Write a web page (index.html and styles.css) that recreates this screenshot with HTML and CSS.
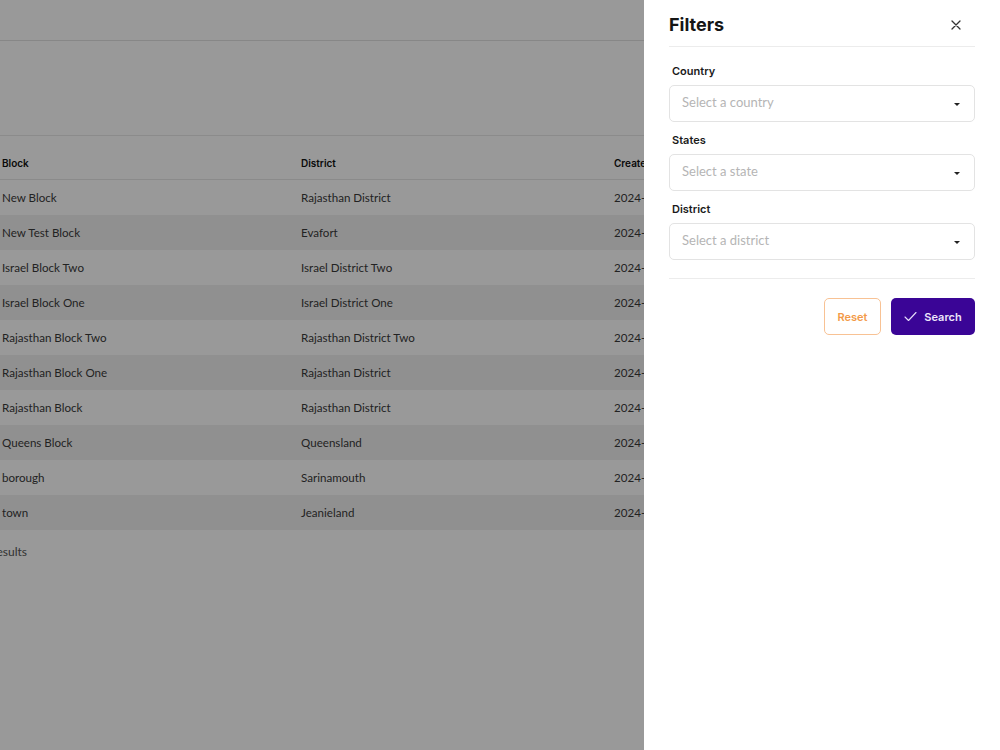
FILE: index.html
```html
<!DOCTYPE html>
<html>
<head>
<meta charset="utf-8">
<link rel="stylesheet" href="styles.css">
</head>
<body>
<div class="page">
  <header class="topbar"></header>
  <section class="toolbar"></section>
  <table class="grid">
    <thead>
      <tr><th class="c1">Block</th><th class="c2">District</th><th class="c3">Created At</th><th>Actions</th></tr>
    </thead>
    <tbody>
      <tr><td>New Block</td><td>Rajasthan District</td><td>2024-10-01</td><td></td></tr>
      <tr><td>New Test Block</td><td>Evafort</td><td>2024-10-01</td><td></td></tr>
      <tr><td>Israel Block Two</td><td>Israel District Two</td><td>2024-10-01</td><td></td></tr>
      <tr><td>Israel Block One</td><td>Israel District One</td><td>2024-10-01</td><td></td></tr>
      <tr><td>Rajasthan Block Two</td><td>Rajasthan District Two</td><td>2024-10-01</td><td></td></tr>
      <tr><td>Rajasthan Block One</td><td>Rajasthan District</td><td>2024-10-01</td><td></td></tr>
      <tr><td>Rajasthan Block</td><td>Rajasthan District</td><td>2024-10-01</td><td></td></tr>
      <tr><td>Queens Block</td><td>Queensland</td><td>2024-10-01</td><td></td></tr>
      <tr><td>borough</td><td>Sarinamouth</td><td>2024-10-01</td><td></td></tr>
      <tr><td>town</td><td>Jeanieland</td><td>2024-10-01</td><td></td></tr>
    </tbody>
  </table>
  <div class="footer"><span class="count">Showing 1 to 10 of 10 results</span></div>
</div>

<div class="backdrop"></div>

<aside class="drawer">
  <div class="drawer-head">
    <h2 class="drawer-title">Filters</h2>
    <button class="close" aria-label="Close">
      <svg width="12" height="12" viewBox="0 0 12 12"><path d="M2 2 L10 10 M10 2 L2 10" stroke="#333" stroke-width="1.3" stroke-linecap="round"/></svg>
    </button>
  </div>
  <div class="fields">
    <label class="label">Country</label>
    <div class="select"><span class="ph">Select a country</span><span class="caret"></span></div>
    <label class="label">States</label>
    <div class="select"><span class="ph">Select a state</span><span class="caret"></span></div>
    <label class="label">District</label>
    <div class="select"><span class="ph">Select a district</span><span class="caret"></span></div>
  </div>
  <div class="actions">
    <button class="btn reset">Reset</button>
    <button class="btn search">
      <svg width="13" height="11" viewBox="0 0 13 11"><path d="M1 6 L4.5 9.5 L12 1.5" fill="none" stroke="#e6defa" stroke-width="1.1" stroke-linecap="round" stroke-linejoin="round"/></svg>
      Search
    </button>
  </div>
</aside>
</body>
</html>
```

FILE: styles.css
```css
html, body {
  margin: 0;
  padding: 0;
  background: #fff;
  overflow: hidden;
}
body {
  font-family: "Lato", "Noto Sans", sans-serif;
  color: #333;
  width: 1000px;
  height: 750px;
}
.page {
  width: 1000px;
}
.topbar {
  height: 40px;
  border-bottom: 1px solid #e2e2e2;
}
.toolbar {
  height: 94px;
  border-bottom: 1px solid #e8e8e8;
}
.grid {
  margin-top: 10px;
  border-collapse: collapse;
  width: 1000px;
  table-layout: fixed;
}
.grid th {
  font-family: "Inter", sans-serif;
  font-weight: 600;
  font-size: 10px;
  color: #111;
  text-align: left;
  height: 33px;
  padding: 0 0 0 2px;
  border-bottom: 1px solid #e6e6e6;
}
.grid .c1 { width: 297px; }
.grid .c2 { width: 311px; }
.grid .c3 { width: 200px; }
.grid td {
  font-size: 11.6px;
  color: #3a3a3a;
  height: 35px;
  padding: 0 0 0 2px;
  white-space: nowrap;
}
.grid tbody tr:nth-child(even) td {
  background: #f1f1f1;
}
.footer {
  width: 27px;
  display: flex;
  justify-content: flex-end;
  height: 42px;
  align-items: center;
}
.count {
  white-space: nowrap;
  font-size: 12px;
  color: #555;
}
.backdrop {
  position: fixed;
  inset: 0;
  background: rgba(0, 0, 0, 0.4);
}
.drawer {
  position: fixed;
  top: 0;
  right: 0;
  bottom: 0;
  width: 356px;
  background: #fff;
  box-sizing: border-box;
  padding: 0 25px 0 25px;
}
.drawer-head {
  display: flex;
  align-items: center;
  justify-content: space-between;
  height: 47px;
  box-sizing: border-box;
  padding-top: 3px;
  border-bottom: 1px solid #ececec;
}
.drawer-title {
  margin: 0;
  font-family: "Inter", sans-serif;
  font-weight: 700;
  font-size: 18px;
  color: #151515;
}
.close {
  border: 0;
  background: none;
  padding: 0;
  width: 14px;
  height: 14px;
  margin-right: 12px;
  display: flex;
  align-items: center;
  justify-content: center;
}
.fields {
  display: flex;
  flex-direction: column;
  padding-top: 17px;
  padding-bottom: 18px;
  border-bottom: 1px solid #ececec;
}
.label {
  font-family: "Inter", sans-serif;
  font-weight: 600;
  font-size: 11px;
  color: #1a1a1a;
  padding-left: 3px;
  height: 14px;
  line-height: 14px;
  margin-bottom: 7px;
}
.select {
  height: 37px;
  box-sizing: border-box;
  border: 1px solid #e3e3e3;
  border-radius: 5px;
  display: flex;
  align-items: center;
  justify-content: space-between;
  padding: 0 14px 3px 12px;
  margin-bottom: 11px;
}
.select:last-child {
  margin-bottom: 0;
}
.ph {
  font-size: 13px;
  color: #b5b5b5;
}
.caret {
  width: 0;
  height: 0;
  border-left: 3px solid transparent;
  border-right: 3px solid transparent;
  border-top: 3px solid #222;
  margin-top: 5px;
}
.actions {
  display: flex;
  justify-content: flex-end;
  gap: 10px;
  padding-top: 19px;
}
.btn {
  height: 37px;
  border-radius: 5px;
  font-family: "Inter", sans-serif;
  font-weight: 600;
  font-size: 11px;
  display: flex;
  align-items: center;
  justify-content: center;
  box-sizing: border-box;
}
.reset {
  width: 57px;
  background: #fff;
  border: 1px solid #f8c294;
  color: #f39a48;
}
.search {
  width: 84px;
  background: #3a0596;
  border: 0;
  color: #ece6fb;
  gap: 7px;
}
```
